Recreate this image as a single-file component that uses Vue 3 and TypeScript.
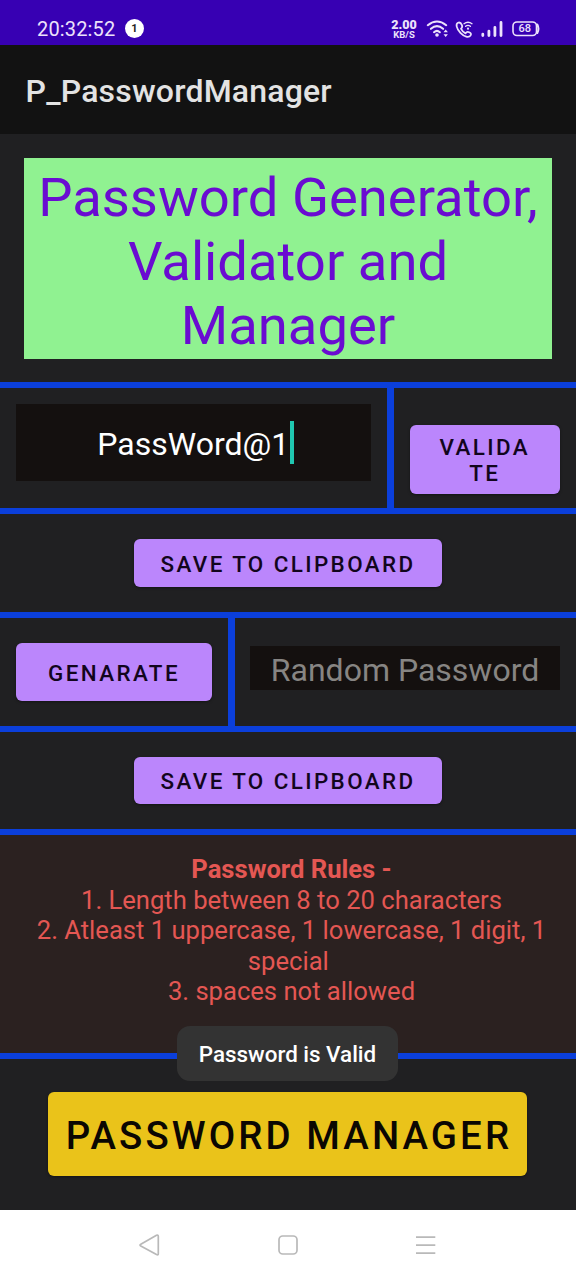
<script setup lang="ts">
import { ref } from 'vue'

const password = ref('PassWord@1')
const rules: string[] = [
  '1. Length between 8 to 20 characters',
  '2. Atleast 1 uppercase, 1 lowercase, 1 digit, 1 special\u00a0',
  '3. spaces not allowed',
]
</script>

<template>
  <div class="screen">
    <header class="status">
      <span class="clock">20:32:52</span>
      <span class="badge">1</span>
      <span class="speed"><b>2.00</b><small>KB/S</small></span>
      <svg class="icons" width="92" height="25" viewBox="0 0 92 25" fill="none" stroke="#ece2fb">
        <g stroke-width="2.100" stroke-linecap="round">
          <path d="M8.800 9.200Q18 1.800 27.200 9.200" />
          <path d="M11.900 12.800Q18 7.600 24.100 12.800" />
          <path d="M15 16.200Q18 13.700 20.800 16.200" />
        </g>
        <circle cx="18" cy="19" r="1.800" fill="#ece2fb" stroke="none" />
        <path d="M24.500 16.300l2.200-2.900 2.200 2.900zM24.500 18.200l2.200 2.800 2.200-2.800z" fill="#ece2fb" stroke="none" />
        <path transform="translate(-3.800 .9) scale(1.100)" d="M38.900 5.300c-2.300 1-1.500 5.400 2.200 9.200 3.600 3.700 7.500 4.700 9.200 2.400.9-1.300.4-2.100-1.300-2.900-1.500-.7-2.300-.5-3.200 1-2-.9-3.200-2.200-4.200-4.300 1.300-.9 1.500-1.600.9-3.200-.8-1.900-1.900-2.900-3.600-2.200z" stroke-width="1.600" stroke-linejoin="round" />
        <path d="M45 7.700q4-3 8 0M46.600 10.300q2.400-1.800 4.800 0" stroke-width="1.400" stroke-linecap="round" />
        <circle cx="49" cy="12.700" r="1.100" fill="#ece2fb" stroke="none" />
        <path d="M63.800 18.200V19.500M69.900 15.200V19.500M75.900 11.500V19.500M82 6.500V19.500" stroke-width="2.800" stroke-linecap="round" />
      </svg>
      <span class="battery">
        <svg width="28" height="16" viewBox="0 0 28 16" fill="none" stroke="#ece2fb">
          <rect x="1" y="1" width="23.500" height="13.500" rx="4" stroke-width="1.600" />
          <path d="M25.300 3.500q2.300 4.250 0 8.500" stroke-width="2" stroke-linecap="round" />
        </svg>
        <span>68</span>
      </span>
    </header>

    <div class="appbar">P_PasswordManager</div>

    <main>
      <section class="hero"><h1>Password Generator,<br>Validator and<br>Manager</h1></section>
      <section class="row check">
        <div class="cell entry">
          <div class="field"><span>{{ password }}</span><i class="caret"></i></div>
        </div>
        <div class="cell action"><button class="btn validate">VALIDA<br>TE</button></div>
      </section>
      <section class="row save first"><button class="btn">SAVE TO CLIPBOARD</button></section>
      <section class="row make">
        <div class="cell source"><button class="btn generate">GENARATE</button></div>
        <div class="cell result"><div class="random">Random Password</div></div>
      </section>
      <section class="row save second"><button class="btn">SAVE TO CLIPBOARD</button></section>
      <section class="row rules">
        <strong>Password Rules -</strong>
        <p v-for="rule in rules" :key="rule">{{ rule }}</p>
      </section>
      <section class="row footer">
        <button class="btn manager">PASSWORD MANAGER</button>
        <div class="toast">Password is Valid</div>
      </section>
    </main>

    <nav>
      <svg width="576" height="70" viewBox="0 0 576 70" fill="none" stroke="#b9b9b9" stroke-width="1.700" stroke-linejoin="round">
        <path d="M140.800 34.200L156.500 25.300Q158.300 24.500 158.300 26.300V43.700Q158.300 45.500 156.500 44.600L140.800 36Q139.200 35.100 140.800 34.200Z" />
        <rect x="279" y="26" width="18" height="18" rx="3.800" />
        <path d="M416 27.200H435.300M416 35.200H435.300M416 43.200H435.300" />
      </svg>
    </nav>
  </div>
</template>

<style>
body {
  margin: 0;
  background: #202022;
}
</style>

<style scoped>
* {
  box-sizing: border-box;
}
.screen {
  width: 576px;
  height: 1280px;
  overflow: hidden;
  display: flex;
  flex-direction: column;
  background: #202022;
  font-family: Roboto, sans-serif;
}
.status {
  flex: none;
  height: 45px;
  padding: 12px 0 0 37px;
  display: flex;
  align-items: center;
  background: #3700b3;
  color: #ece2fb;
}
.clock {
  flex: none;
  width: 88px;
  font-size: 20px;
  letter-spacing: 0.150px;
  line-height: 32px;
  white-space: nowrap;
}
.badge {
  flex: none;
  width: 19px;
  height: 19px;
  border-radius: 50%;
  background: #fff;
  color: #222;
  font: bold 11px/20px Roboto, sans-serif;
  text-align: center;
}
.speed {
  flex: none;
  margin-left: 247px;
  width: 26px;
  display: flex;
  flex-direction: column;
  align-items: center;
  font-weight: 700;
}
.speed b {
  font-size: 12.500px;
  line-height: 11px;
}
.speed small {
  font-size: 9.500px;
  line-height: 9px;
  font-weight: 700;
}
.icons {
  flex: none;
  margin-left: 2px;
}
.battery {
  flex: none;
  display: grid;
  width: 28px;
  height: 16px;
  margin-left: 1px;
}
.battery > * {
  grid-area: 1 / 1;
}
.battery span {
  width: 25.500px;
  font-size: 11px;
  font-weight: 500;
  line-height: 16px;
  text-align: center;
}
.appbar {
  flex: none;
  height: 89px;
  padding-left: 25.600px;
  background: #121212;
  color: #e3e3e3;
  font-size: 32px;
  font-weight: 500;
  letter-spacing: 0.190px;
  line-height: 93px;
}
main {
  height: 1076px;
  flex: none;
}
.hero {
  height: 248px;
  padding: 24px;
}
h1 {
  margin: 0;
  height: 201px;
  padding-top: 8px;
  background: #90f291;
  color: #6a0cd1;
  font-size: 54.400px;
  font-weight: 400;
  line-height: 64px;
  text-align: center;
  white-space: nowrap;
}
.row {
  border-top: 6px solid #0b3fdb;
}
.check,
.make {
  display: flex;
}
.check {
  height: 126px;
}
.entry {
  width: 394px;
  padding: 16px 16px 0;
  border-right: 7px solid #0b3fdb;
}
.field {
  width: 355px;
  height: 77px;
  display: flex;
  align-items: center;
  justify-content: center;
  padding-left: 4px;
  background: #14100f;
  color: #fff;
  font-size: 32px;
}
.field span {
  padding-top: 2px;
}
.caret {
  width: 4px;
  height: 43px;
  margin-left: 0.500px;
  background: #20c7b0;
}
.action {
  flex: 1;
  padding: 37px 16px 0 15.500px;
}
.btn {
  display: block;
  border: 0;
  border-radius: 6px;
  padding: 1px 0 0;
  background: #bb86fc;
  color: #12051d;
  font: 500 22.400px/26px Roboto, sans-serif;
  letter-spacing: 2.400px;
  text-align: center;
  box-shadow: 0 1px 3px rgba(0, 0, 0, 0.4);
  white-space: nowrap;
}
.validate {
  width: 100%;
  height: 69px;
}
.save .btn {
  width: 308px;
  height: 48px;
  margin: 0 auto;
}
.first {
  height: 104px;
  padding-top: 25px;
}
.make {
  height: 114px;
}
.source {
  width: 235px;
  padding: 25px 0 0 16px;
  border-right: 7px solid #0b3fdb;
}
.generate {
  width: 196px;
  height: 58px;
}
.result {
  flex: 1;
  padding: 28px 16px 0 15px;
}
.random {
  height: 44px;
  background: #14100f;
  color: #878583;
  font-size: 32px;
  line-height: 49px;
  text-align: center;
}
.second {
  height: 103px;
  padding-top: 25px;
}
.second .btn {
  height: 47px;
}
.rules {
  height: 224px;
  padding: 19px 24px 0 31px;
  background: #2b2120;
  color: #e45753;
  font-size: 25.600px;
  line-height: 30.500px;
  text-align: center;
}
.rules strong {
  display: block;
  font-weight: 700;
}
.rules p {
  margin: 0;
}
.footer {
  position: relative;
  height: 157px;
  padding: 33px 0 0 48px;
}
.manager {
  width: 479px;
  height: 84px;
  padding: 3px 0 0 3px;
  background: #eac31a;
  color: #0b0702;
  font-size: 38.400px;
  letter-spacing: 3.100px;
}
.toast {
  position: absolute;
  left: 177px;
  top: -33px;
  width: 221px;
  height: 55px;
  border-radius: 13px;
  background: #333;
  color: #fff;
  font-size: 22.400px;
  font-weight: 500;
  line-height: 57px;
  text-align: center;
}
nav {
  flex: none;
  height: 70px;
  background: #fff;
}
</style>
